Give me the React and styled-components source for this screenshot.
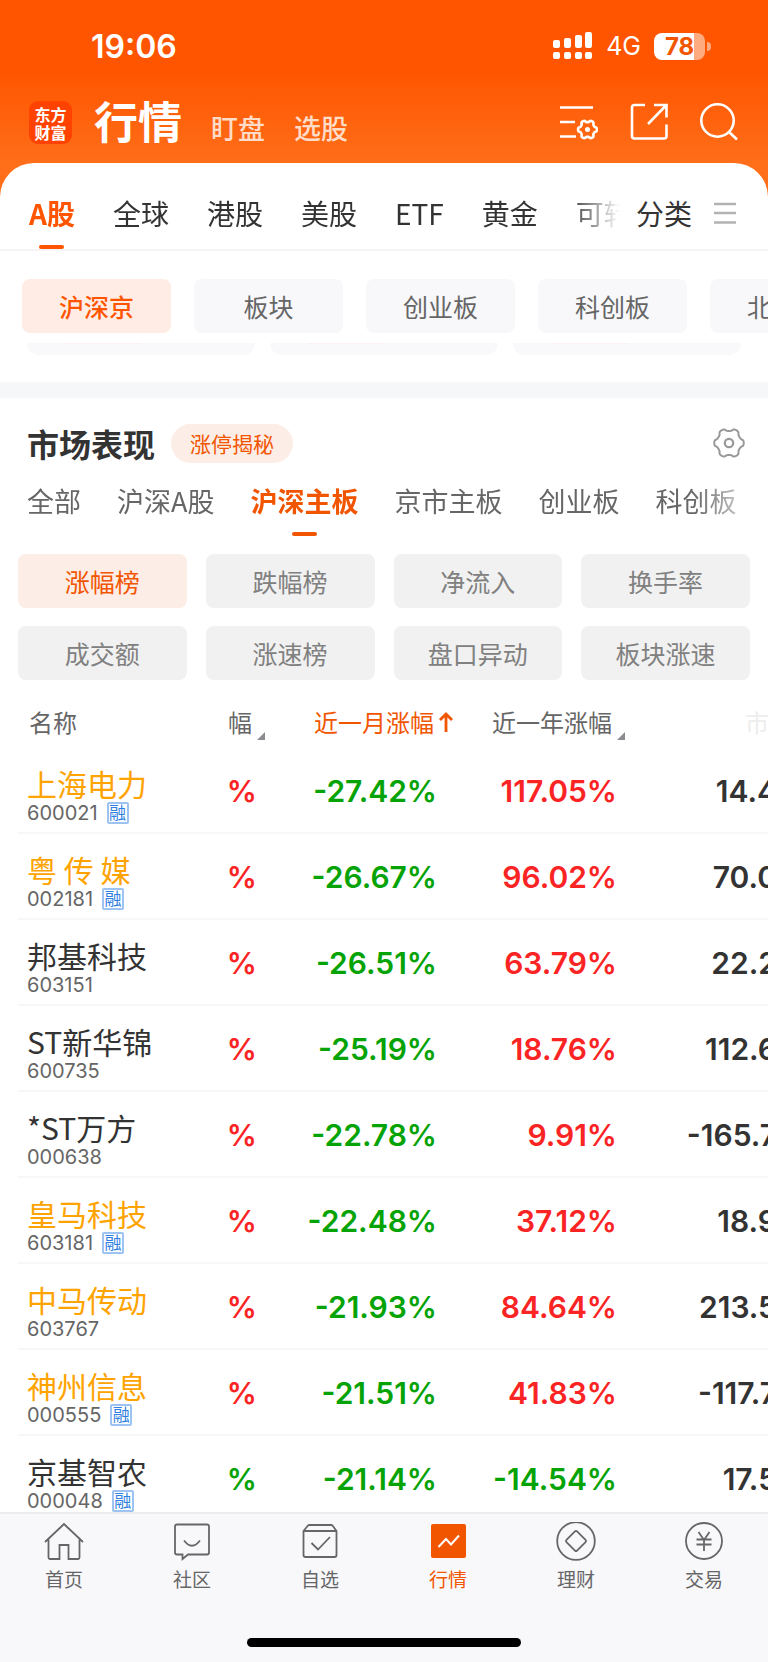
import React from 'react'
import styled, { createGlobalStyle } from 'styled-components'

const CJK = '"Noto Sans CJK SC", sans-serif'
const NUM = 'Inter, "Noto Sans CJK SC", sans-serif'

const ORANGE = '#f25500'
const RED = '#fb2424'
const GREEN = '#06a306'
const GOLD = '#ffa300'
const DARK = '#333333'
const GREY = '#666666'

const GlobalStyle = createGlobalStyle`
  * {
    box-sizing: border-box;
  }
  body {
    margin: 0;
    font-family: ${CJK};
    color: ${DARK};
  }
  button {
    border: 0;
    padding: 0;
    background: none;
    font: inherit;
    color: inherit;
    white-space: nowrap;
    cursor: pointer;
  }
  svg {
    display: block;
    fill: none;
  }
`

const Screen = styled.div`
  display: flex;
  flex-direction: column;
  height: 100vh;
  overflow: hidden;
  background: #ff6e19;
`

const Header = styled.header`
  flex: none;
  padding-bottom: 10px;
  background: linear-gradient(#ff5500 0, #ff5500 70px, #ff6e19 100%);
  color: #fff;
`

const StatusBar = styled.div`
  display: flex;
  align-items: center;
  justify-content: space-between;
  height: 92px;
  padding: 0 57px 0 91px;
  font-family: ${NUM};
`

const Clock = styled.span`
  font-size: 32px;
  font-weight: 600;
`

const StatusIcons = styled.div`
  display: flex;
  align-items: center;
  gap: 13px;
  font-size: 25px;
`

const Battery = styled.div`
  display: flex;
  align-items: center;
  gap: 2px;
`

const BatteryBody = styled.div`
  width: 51px;
  height: 27px;
  border-radius: 8px;
  background: linear-gradient(90deg, #fff 78%, #ffab80 78%);
  color: ${ORANGE};
  font-size: 24px;
  font-weight: 700;
  line-height: 27px;
  text-align: center;
`

const BatteryTip = styled.div`
  width: 4px;
  height: 9px;
  border-radius: 0 4px 4px 0;
  background: #ffab80;
`

const NavRow = styled.div`
  display: flex;
  align-items: center;
  height: 61px;
  padding: 0 30px 0 29px;
`

const Logo = styled.div`
  display: grid;
  place-content: center;
  width: 43px;
  height: 43px;
  border-radius: 9px;
  background: #ff4200;
  font-size: 16px;
  font-weight: 700;
  line-height: 18px;
`

const Titles = styled.div`
  display: flex;
  align-items: baseline;
  flex: 1;
  gap: 29px;
  margin-left: 22px;
  padding-bottom: 6px;
`

const PageTitle = styled.h1`
  margin: 0;
  font-size: 44px;
  font-weight: 700;
  line-height: 60px;
`

const TitleTab = styled.button`
  font-size: 27px;
  font-weight: 500;
  color: #ffdcc8;
`

const NavIcons = styled.div`
  display: flex;
  align-items: center;
  gap: 32px;
  padding-bottom: 2px;
`

const Sheet = styled.main`
  display: flex;
  flex-direction: column;
  flex: 1;
  min-height: 0;
  overflow: hidden;
  border-radius: 34px 34px 0 0;
  background: #fff;
`

const MarketTabs = styled.nav`
  display: flex;
  flex: none;
  height: 88px;
  padding: 0 32px 0 29px;
  border-bottom: 2px solid #f5f5f6;
`

const MarketScroll = styled.div`
  display: flex;
  flex: 1;
  gap: 38px;
  overflow: hidden;
  mask-image: linear-gradient(90deg, #000 calc(100% - 52px), transparent 100%);
`

const MarketTab = styled.button`
  display: flex;
  flex-direction: column;
  flex: none;
  align-items: center;
  padding-top: 28px;
  font-size: 28px;
  font-weight: ${(p) => (p.$active ? 700 : 400)};
  line-height: 44px;
  color: ${(p) => (p.$active ? '#ff5500' : DARK)};
  &::after {
    content: '';
    width: 25px;
    height: 4px;
    margin-top: 10px;
    border-radius: 2px;
    background: ${(p) => (p.$active ? '#ff5500' : 'transparent')};
  }
`

const CategoryButton = styled.button`
  display: flex;
  align-items: center;
  gap: 22px;
  height: 44px;
  margin: 28px 0 0 16px;
  font-size: 28px;
`

const ChipRow = styled.div`
  display: flex;
  flex: none;
  gap: 23px;
  padding: 28px 0 0 22px;
  overflow: hidden;
`

const Chip = styled.button`
  flex: none;
  width: 149px;
  height: 54px;
  border-radius: 8px;
  background: ${(p) => (p.$active ? '#ffede5' : '#f8f8fa')};
  color: ${(p) => (p.$active ? '#ff5500' : GREY)};
  font-size: 25px;
  font-weight: ${(p) => (p.$active ? 500 : 400)};
`

const IndexCards = styled.div`
  display: grid;
  grid-template-columns: repeat(3, 1fr);
  flex: none;
  gap: 15px;
  padding: 10px 27px 27px;
`

const IndexCard = styled.div`
  height: 12px;
  border-radius: 0 0 14px 14px;
  background: #f9f9fb;
  &::before {
    content: '';
    display: block;
    width: 76px;
    height: 1px;
    margin-left: 38px;
    background: #fcf0f1;
  }
`

const Divider = styled.div`
  flex: none;
  height: 16px;
  background: #f6f7f9;
`

const SectionHead = styled.div`
  display: flex;
  align-items: center;
  flex: none;
  height: 90px;
  padding: 0 23px 0 27px;
`

const SectionTitle = styled.h2`
  margin: 0 16px 0 0;
  font-size: 32px;
  font-weight: 700;
  line-height: 40px;
`

const Pill = styled.button`
  height: 39px;
  padding: 0 19px;
  border-radius: 20px;
  background: #fcede6;
  color: ${ORANGE};
  font-size: 21px;
`

const GearButton = styled.button`
  margin-left: auto;
`

const BoardTabs = styled.nav`
  display: flex;
  flex: none;
  gap: 36px;
  height: 66px;
  margin-top: -7px;
  padding: 0 27px;
  overflow: hidden;
  mask-image: linear-gradient(90deg, #000 calc(100% - 76px), transparent 100%);
`

const BoardTab = styled.button`
  display: flex;
  flex-direction: column;
  flex: none;
  align-items: center;
  font-size: 27px;
  font-weight: ${(p) => (p.$active ? 700 : 400)};
  line-height: 40px;
  color: ${(p) => (p.$active ? ORANGE : GREY)};
  &::after {
    content: '';
    width: 25px;
    height: 4px;
    margin-top: 11px;
    border-radius: 2px;
    background: ${(p) => (p.$active ? ORANGE : 'transparent')};
  }
`

const FilterGrid = styled.div`
  display: grid;
  grid-template-columns: repeat(4, 1fr);
  flex: none;
  gap: 18px 19px;
  padding: 7px 18px 0;
`

const Filter = styled.button`
  height: 54px;
  border-radius: 8px;
  background: ${(p) => (p.$active ? '#fcede6' : '#f1f1f1')};
  color: ${(p) => (p.$active ? ORANGE : '#808080')};
  font-size: 25px;
`

const TableWrap = styled.div`
  flex: 1;
  min-height: 0;
  padding-left: 18px;
  overflow: hidden;
`

// wider than the screen, the last column runs off the right edge
const Table = styled.table`
  width: calc(100% + 47px);
  table-layout: fixed;
  border-collapse: collapse;
`

const HeadCell = styled.th`
  width: ${(p) => p.$width || 'auto'};
  height: 67px;
  padding: 16px ${(p) => p.$right || 0}px 0 ${(p) => p.$left || 0}px;
  color: ${(p) => p.$color || GREY};
  font-size: 24px;
  font-weight: 400;
  line-height: 36px;
  text-align: left;
  white-space: nowrap;
`

const SortButton = styled.button`
  display: flex;
  align-items: ${(p) => (p.$active ? 'center' : 'flex-end')};
  gap: 5px;
  margin-left: auto;
  line-height: 36px;
`

const Row = styled.tr`
  height: 86px;
  border-bottom: 2px solid #f7f7f7;
`

const NameCell = styled.td`
  padding: 8px 0 0 9px;
  white-space: nowrap;
`

const StockName = styled.div`
  color: ${(p) => (p.$gold ? GOLD : DARK)};
  font-size: 30px;
  line-height: 38px;
`

const StockCode = styled.div`
  display: flex;
  align-items: center;
  gap: 9px;
  height: 22px;
  color: ${GREY};
  font-family: ${NUM};
  font-size: 20px;
`

const MarginBadge = styled.span`
  width: 22px;
  height: 22px;
  border: 2px solid #9cc3f2;
  border-radius: 2px;
  color: #2f80e0;
  font-size: 17px;
  line-height: 18px;
  text-align: center;
`

const ValueCell = styled.td`
  padding: 2px ${(p) => p.$right || 18}px 0 0;
  color: ${(p) => p.$color};
  font-family: ${NUM};
  font-size: 30px;
  font-weight: 600;
  text-align: right;
  white-space: nowrap;
`

const TabBar = styled.footer`
  flex: none;
  height: 150px;
  border-top: 2px solid #ececee;
  background: #f8f8fb;
`

const TabList = styled.nav`
  display: grid;
  grid-template-columns: repeat(6, 1fr);
  height: 124px;
`

const TabLink = styled.a`
  display: flex;
  flex-direction: column;
  align-items: center;
  gap: 3px;
  padding-top: 8px;
  color: ${(p) => (p.$active ? ORANGE : GREY)};
  font-size: 19px;
  line-height: 28px;
  text-decoration: none;
`

const HomeIndicator = styled.div`
  width: 274px;
  height: 9px;
  margin: 0 auto;
  border-radius: 5px;
  background: #000;
`

// six-lobed gear outline around (cx, cy)
const gearPath = (cx, cy, r, depth) => {
  const points = []
  for (let i = 0; i < 120; i += 1) {
    const a = (i / 120) * Math.PI * 2
    const rr = r + depth * Math.tanh(1.8 * Math.cos(6 * a))
    points.push(`${(cx + rr * Math.cos(a)).toFixed(2)} ${(cy + rr * Math.sin(a)).toFixed(2)}`)
  }
  return `M${points.join('L')}Z`
}

const SignalIcon = () => (
  <svg width="40" height="28" viewBox="0 0 40 28" aria-hidden="true">
    <g fill="#fff">
      <rect x="0" y="8" width="7" height="8" rx="2" />
      <rect x="11" y="6" width="7" height="10" rx="2" />
      <rect x="22" y="3" width="7" height="13" rx="2" />
      <rect x="32" y="0" width="7" height="16" rx="2" />
      <rect x="0" y="20" width="7" height="7" rx="2" />
      <rect x="11" y="20" width="7" height="7" rx="2" />
      <rect x="22" y="20" width="7" height="7" rx="2" />
      <rect x="32" y="20" width="7" height="7" rx="2" />
    </g>
  </svg>
)

const ListGearIcon = () => (
  <svg width="38" height="38" viewBox="0 0 38 38" stroke="#fff" strokeWidth="2.6">
    <path d="M0 4.500H33M0 19H15M0 33.500H16" />
    <path d={gearPath(27.5, 26.5, 8.4, 1.1)} />
    <circle cx="27.5" cy="26.5" r="2.5" fill="#fff" stroke="none" />
  </svg>
)

const ShareIcon = () => (
  <svg width="38" height="38" viewBox="0 0 38 38" stroke="#fff" strokeWidth="2.6">
    <path d="M15 2H4.500Q2 2 2 4.500V33Q2 35.500 4.500 35.500H34Q36.500 35.500 36.500 33V21.500" />
    <path d="M24 2H36.500V14.500M36 2.500L18 21" />
  </svg>
)

const SearchIcon = () => (
  <svg width="38" height="38" viewBox="0 0 38 38" stroke="#fff" strokeWidth="2.6">
    <circle cx="17.5" cy="17.5" r="16.2" />
    <path d="M28.500 28.500L37 36.500" />
  </svg>
)

const MenuIcon = () => (
  <svg width="22" height="24" viewBox="0 0 22 24" stroke="#b2b2b2" strokeWidth="2.6">
    <path d="M0 3H22M0 12H22M0 21.500H22" />
  </svg>
)

const GearIcon = () => (
  <svg width="32" height="32" viewBox="0 0 32 32" stroke="#999" strokeWidth="2">
    <path d={gearPath(16, 16, 13.4, 1.4)} />
    <circle cx="16" cy="16" r="4.2" strokeWidth="2.2" />
  </svg>
)

const SortMark = () => (
  <svg width="8" height="8" viewBox="0 0 8 8">
    <path d="M8 0V8H0Z" fill="#8c8c91" />
  </svg>
)

const ArrowUp = () => (
  <svg width="14" height="20" viewBox="0 0 14 20" stroke={ORANGE} strokeWidth="2.8">
    <path d="M7 20V2M1 8L7 2L13 8" />
  </svg>
)

const tabIcons = {
  home: <path d="M1 20L20 2L39 20M4.500 17.500V35.500Q4.500 37 6 37H15.500V23H24.500V37H34Q35.500 37 35.500 35.500V17.500" />,
  community: (
    <>
      <path d="M5 2.500H35Q37 2.500 37 4.500V30.500Q37 32.500 35 32.500H16L10.500 37V32.500H5Q3 32.500 3 30.500V4.500Q3 2.500 5 2.500Z" />
      <path d="M12 18.500Q20 29 28 18.500" />
    </>
  ),
  picks: (
    <>
      <path d="M3.500 9L8 3.500Q8.500 3 9.500 3H31Q32 3 32.500 3.500L36.500 9V33Q36.500 35 34.500 35H5.500Q3.500 35 3.500 33ZM3.500 9H36.500" />
      <path d="M11.500 21L18 27.500L30 15" />
    </>
  ),
  market: (
    <>
      <rect x="3" y="2" width="35" height="34" rx="2" fill={ORANGE} stroke="none" />
      <path d="M10.500 25L18 17L23 22.500L31 13.500" stroke="#fff" strokeWidth="2" />
    </>
  ),
  wealth: (
    <>
      <circle cx="20" cy="19" r="18.8" />
      <rect x="12.5" y="11.5" width="15" height="15" rx="1.5" transform="rotate(45 20 19)" />
    </>
  ),
  trade: (
    <>
      <circle cx="20" cy="19" r="18" />
      <path d="M14.500 10L20 18L25.500 10M12.500 17.500H27.500M12.500 22.500H27.500M20 17.500V29" />
    </>
  ),
}

const marketTabs = ['A股', '全球', '港股', '美股', 'ETF', '黄金', '可转债']
const chips = ['沪深京', '板块', '创业板', '科创板', '北交所']
const boardTabs = ['全部', '沪深A股', '沪深主板', '京市主板', '创业板', '科创板']
const filters = ['涨幅榜', '跌幅榜', '净流入', '换手率', '成交额', '涨速榜', '盘口异动', '板块涨速']

const stocks = [
  { name: '上海电力', code: '600021', margin: true, gold: true, month: '-27.42%', year: '117.05%', pe: '14.4' },
  { name: '粤 传 媒', code: '002181', margin: true, gold: true, month: '-26.67%', year: '96.02%', pe: '70.0' },
  { name: '邦基科技', code: '603151', month: '-26.51%', year: '63.79%', pe: '22.2' },
  { name: 'ST新华锦', code: '600735', month: '-25.19%', year: '18.76%', pe: '112.6' },
  { name: '*ST万方', code: '000638', month: '-22.78%', year: '9.91%', pe: '-165.7' },
  { name: '皇马科技', code: '603181', margin: true, gold: true, month: '-22.48%', year: '37.12%', pe: '18.9' },
  { name: '中马传动', code: '603767', gold: true, month: '-21.93%', year: '84.64%', pe: '213.5' },
  { name: '神州信息', code: '000555', margin: true, gold: true, month: '-21.51%', year: '41.83%', pe: '-117.7' },
  { name: '京基智农', code: '000048', margin: true, down: true, month: '-21.14%', year: '-14.54%', pe: '17.5' },
]

const tabs = [
  { label: '首页', icon: 'home' },
  { label: '社区', icon: 'community' },
  { label: '自选', icon: 'picks' },
  { label: '行情', icon: 'market', active: true },
  { label: '理财', icon: 'wealth' },
  { label: '交易', icon: 'trade' },
]

const AppHeader = () => (
  <Header>
    <StatusBar>
      <Clock>19:06</Clock>
      <StatusIcons>
        <SignalIcon />
        <span>4G</span>
        <Battery>
          <BatteryBody>78</BatteryBody>
          <BatteryTip />
        </Battery>
      </StatusIcons>
    </StatusBar>
    <NavRow>
      <Logo>
        <span>东方</span>
        <span>财富</span>
      </Logo>
      <Titles>
        <PageTitle>行情</PageTitle>
        <TitleTab>盯盘</TitleTab>
        <TitleTab>选股</TitleTab>
      </Titles>
      <NavIcons>
        <button aria-label="设置"><ListGearIcon /></button>
        <button aria-label="分享"><ShareIcon /></button>
        <button aria-label="搜索"><SearchIcon /></button>
      </NavIcons>
    </NavRow>
  </Header>
)

const StockTable = () => (
  <TableWrap>
    <Table>
      <thead>
        <tr>
          <HeadCell $left={11}>名称</HeadCell>
          <HeadCell $width="80px" $right={10}>
            <SortButton>幅<SortMark /></SortButton>
          </HeadCell>
          <HeadCell $width="180px" $right={2} $color={ORANGE}>
            <SortButton $active>近一月涨幅<ArrowUp /></SortButton>
          </HeadCell>
          <HeadCell $width="180px" $right={10}>
            <SortButton>近一年涨幅<SortMark /></SortButton>
          </HeadCell>
          <HeadCell $width="180px" $left={110} $color="#ededed">市</HeadCell>
        </tr>
      </thead>
      <tbody>
        {stocks.map((s) => (
          <Row key={s.code}>
            <NameCell>
              <StockName $gold={s.gold}>{s.name}</StockName>
              <StockCode>
                {s.code}
                {s.margin && <MarginBadge>融</MarginBadge>}
              </StockCode>
            </NameCell>
            <ValueCell $color={s.down ? GREEN : RED}>%</ValueCell>
            <ValueCell $color={GREEN}>{s.month}</ValueCell>
            <ValueCell $color={s.down ? GREEN : RED}>{s.year}</ValueCell>
            <ValueCell $color={DARK} $right={38}>{s.pe}</ValueCell>
          </Row>
        ))}
      </tbody>
    </Table>
  </TableWrap>
)

const App = () => (
  <Screen>
    <GlobalStyle />
    <AppHeader />
    <Sheet>
      <MarketTabs>
        <MarketScroll>
          {marketTabs.map((t, i) => <MarketTab key={t} $active={i === 0}>{t}</MarketTab>)}
        </MarketScroll>
        <CategoryButton>分类<MenuIcon /></CategoryButton>
      </MarketTabs>
      <ChipRow>
        {chips.map((c, i) => <Chip key={c} $active={i === 0}>{c}</Chip>)}
      </ChipRow>
      <IndexCards>
        <IndexCard />
        <IndexCard />
        <IndexCard />
      </IndexCards>
      <Divider />
      <SectionHead>
        <SectionTitle>市场表现</SectionTitle>
        <Pill>涨停揭秘</Pill>
        <GearButton aria-label="榜单设置"><GearIcon /></GearButton>
      </SectionHead>
      <BoardTabs>
        {boardTabs.map((t) => <BoardTab key={t} $active={t === '沪深主板'}>{t}</BoardTab>)}
      </BoardTabs>
      <FilterGrid>
        {filters.map((f, i) => <Filter key={f} $active={i === 0}>{f}</Filter>)}
      </FilterGrid>
      <StockTable />
    </Sheet>
    <TabBar>
      <TabList>
        {tabs.map((t) => (
          <TabLink key={t.label} href="#" $active={t.active}>
            <svg width="40" height="40" viewBox="0 0 40 40" stroke="currentColor" strokeWidth="1.8">
              {tabIcons[t.icon]}
            </svg>
            {t.label}
          </TabLink>
        ))}
      </TabList>
      <HomeIndicator />
    </TabBar>
  </Screen>
)

export default App
